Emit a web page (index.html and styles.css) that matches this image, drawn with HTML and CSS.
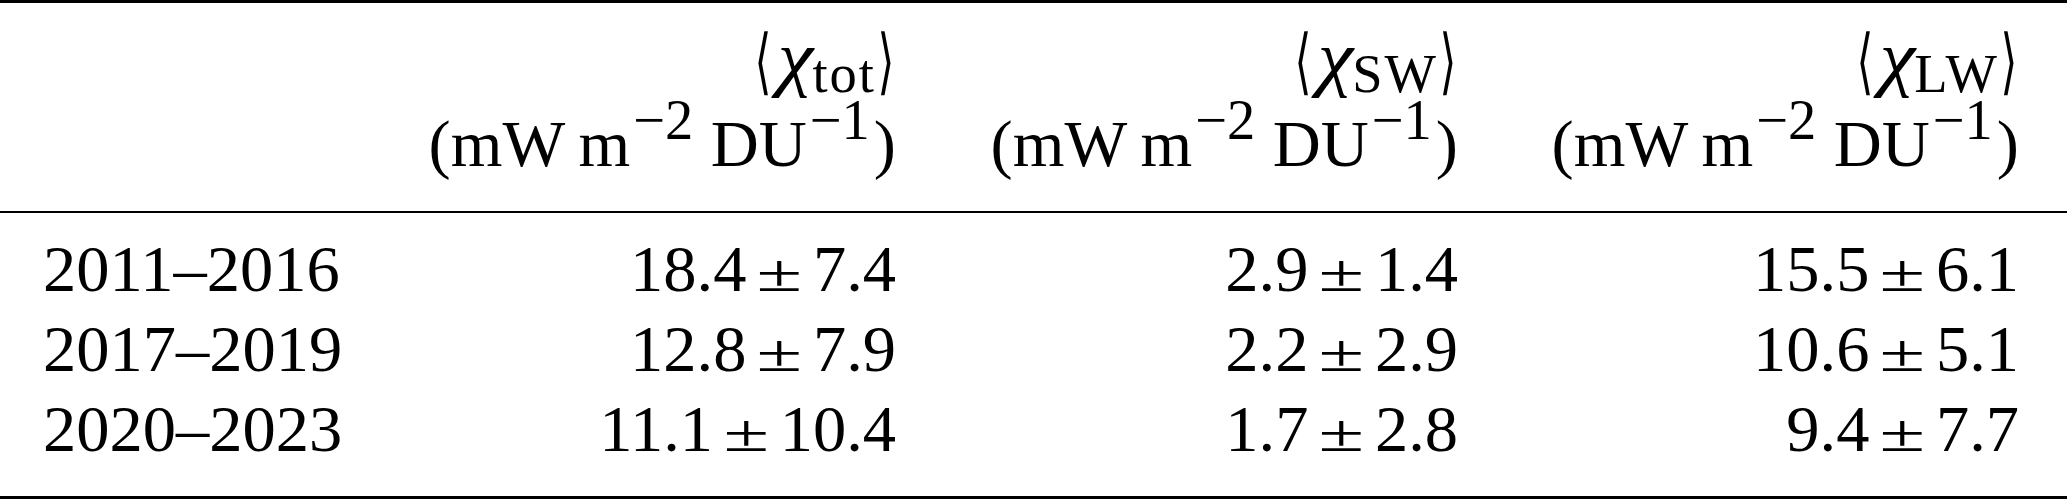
FILE: index.html
```html
<!DOCTYPE html>
<html>
<head>
<meta charset="utf-8">
<link rel="stylesheet" href="styles.css">
</head>
<body>
<div class="table">
  <div class="head">
    <div class="row hl1">
      <div class="c first"></div>
      <div class="c num"><span class="ang">⟨</span><i class="chi">χ</i><span class="sub">tot</span><span class="ang">⟩</span></div>
      <div class="c num"><span class="ang">⟨</span><i class="chi">χ</i><span class="sub">SW</span><span class="ang">⟩</span></div>
      <div class="c num"><span class="ang">⟨</span><i class="chi">χ</i><span class="sub">LW</span><span class="ang">⟩</span></div>
    </div>
    <div class="row hl2">
      <div class="c first"></div>
      <div class="c num">(mW<span class="thin"></span>m<span class="sup">−2</span><span class="thin"></span>DU<span class="sup">−1</span>)</div>
      <div class="c num">(mW<span class="thin"></span>m<span class="sup">−2</span><span class="thin"></span>DU<span class="sup">−1</span>)</div>
      <div class="c num">(mW<span class="thin"></span>m<span class="sup">−2</span><span class="thin"></span>DU<span class="sup">−1</span>)</div>
    </div>
  </div>
  <div class="body">
    <div class="row">
      <div class="c first">2011–2016</div>
      <div class="c num">18.4<span class="pm">±</span>7.4</div>
      <div class="c num">2.9<span class="pm">±</span>1.4</div>
      <div class="c num">15.5<span class="pm">±</span>6.1</div>
    </div>
    <div class="row">
      <div class="c first">2017–2019</div>
      <div class="c num">12.8<span class="pm">±</span>7.9</div>
      <div class="c num">2.2<span class="pm">±</span>2.9</div>
      <div class="c num">10.6<span class="pm">±</span>5.1</div>
    </div>
    <div class="row">
      <div class="c first">2020–2023</div>
      <div class="c num">11.1<span class="pm">±</span>10.4</div>
      <div class="c num">1.7<span class="pm">±</span>2.8</div>
      <div class="c num">9.4<span class="pm">±</span>7.7</div>
    </div>
  </div>
</div>
</body>
</html>
```

FILE: styles.css
```css
html, body {
  margin: 0;
  padding: 0;
  background: #fff;
}

body {
  font-family: "Liberation Serif", "Times New Roman", serif;
  font-size: 66.5px;
  color: #000;
}

.table {
  width: 2067px;
  border-top: 3px solid #000;
  border-bottom: 3px solid #000;
}

.head {
  padding: 15px 0 27px;
  border-bottom: 2px solid #000;
  display: flex;
  flex-direction: column;
  gap: 6px;
}

.body {
  padding: 16px 0 27px;
}

.row {
  display: grid;
  grid-template-columns: 300px 553px 562px 561px;
  padding: 0 48px 0 43px;
  line-height: 80px;
  height: 80px;
}

.c {
  white-space: nowrap;
}

.first {
  text-align: left;
}

.num {
  text-align: right;
}

.ang {
  font-family: "DejaVu Sans", "DejaVu Serif", sans-serif;
  font-weight: 300;
  display: inline-flex;
  justify-content: center;
  width: 20px;
  transform: translateY(4px) scale(0.65, 1.08);
  transform-origin: 50% 62px;
}

.chi {
  display: inline-block;
  font-style: italic;
  font-size: 1.1em;
  width: 0.5em;
  transform: scaleX(1.1);
  transform-origin: 0 0;
}

.sub {
  font-size: 0.82em;
  line-height: 0;
  vertical-align: -10px;
  margin-left: 3px;
  letter-spacing: 2px;
}

.sup {
  font-size: 0.85em;
  line-height: 0;
  vertical-align: 27px;
  margin-left: 3px;
  margin-right: 4px;
}

.thin {
  display: inline-block;
  width: 0.2em;
}

.pm {
  display: inline-block;
  width: 1em;
  text-align: center;
  transform: scale(1.25, 0.78);
  transform-origin: 50% 62.45px;
}
```
